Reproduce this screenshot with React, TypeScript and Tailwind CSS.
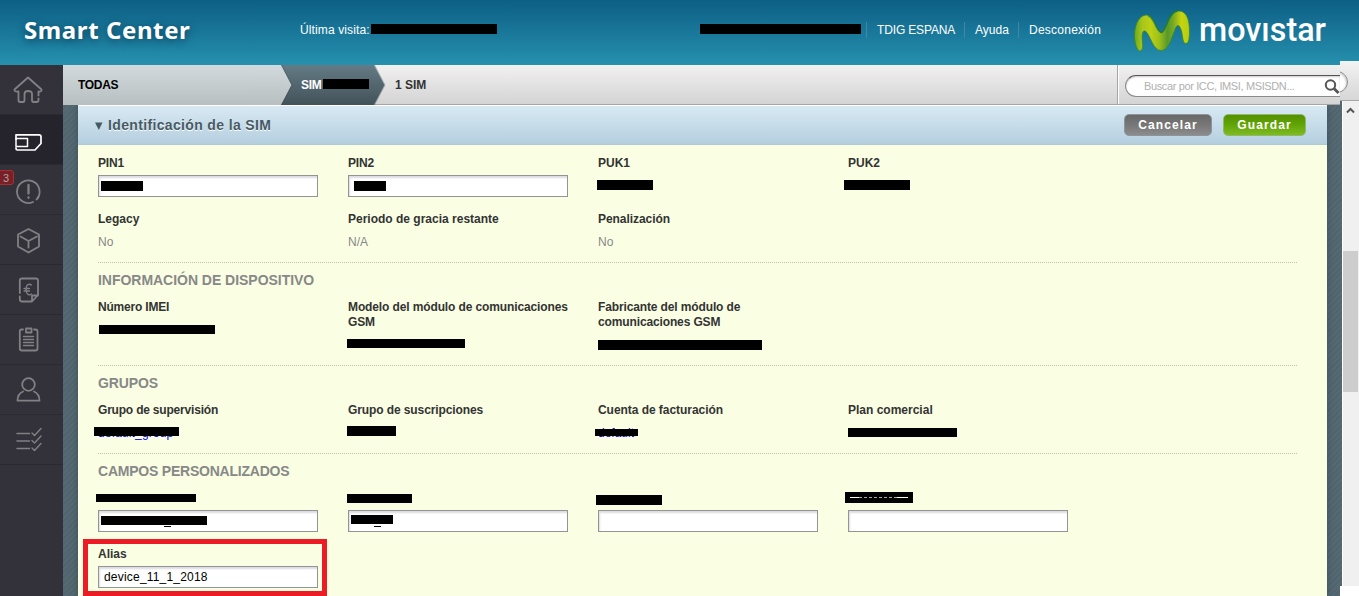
import type { ReactNode } from "react";

function Bar({ className }: { className: string }) {
  return <span className={`absolute bg-black ${className}`} />;
}

function Label({ children, className = "" }: { children?: ReactNode; className?: string }) {
  return (
    <div
      className={`relative top-px min-h-[15px] text-[12px] leading-[15px] font-bold text-[#333] ${className}`}
    >
      {children}
    </div>
  );
}

function Input({ children }: { children?: ReactNode }) {
  return (
    <div className="relative mt-[5px] h-[22px] border border-[#949494] bg-white pl-[5px] text-[12px] leading-[21px] tracking-[0.2px] text-black shadow-[inset_1px_2px_2px_#dcdce2]">
      {children}
    </div>
  );
}

function Value({ children }: { children?: ReactNode }) {
  return (
    <div className="relative mt-[5px] h-[22px] text-[12px] leading-[22px] text-[#888]">{children}</div>
  );
}

function Field({ children }: { children: ReactNode }) {
  return <div className="w-[220px]">{children}</div>;
}

function Row({ children }: { children: ReactNode }) {
  return <div className="flex h-[56px] gap-[30px]">{children}</div>;
}

function Heading({ children, className }: { children: ReactNode; className: string }) {
  return (
    <h3 className={`mb-[10px] pt-[8px] text-[14px] leading-[18px] font-bold text-[#888] ${className}`}>
      {children}
    </h3>
  );
}

function Chevron({ fill }: { fill: string }) {
  return (
    <svg width="12" height="40" viewBox="0 0 12 40" className="relative z-10 -mr-[12px] shrink-0">
      <defs>
        <linearGradient id="crumbLight" x1="0" y1="0" x2="0" y2="1">
          <stop offset="0" stopColor="#d2dadd" />
          <stop offset="1" stopColor="#b7bfc0" />
        </linearGradient>
        <linearGradient id="crumbDark" x1="0" y1="0" x2="0" y2="1">
          <stop offset="0" stopColor="#647b85" />
          <stop offset="1" stopColor="#435259" />
        </linearGradient>
      </defs>
      <path d="M0 0L10.5 20L0 40z" fill={fill} />
      <path d="M0.5 0L11 20L0.5 40" fill="none" stroke="#34454d" strokeOpacity=".35" />
    </svg>
  );
}

const icons: ReactNode[] = [
  <g key="home">
    <path d="M14.5 24.5L28 12.5L41.5 24.5Q42 27 38.500 26.500V35Q38.500 37 36.500 37H33.500Q32 37 32 35V29Q32 26 28 26Q24.500 26 24.500 29V35Q24.500 37 23 37H20Q18.500 37 18.500 35V26.500Q14 27 14.500 24.500Z" />
    <path d="M36.500 32h4" stroke="#33323a" strokeWidth="1.600" strokeLinecap="butt" />
  </g>,
  <g key="sim" stroke="#fff" strokeWidth="1.7">
    <path d="M16 24V19.800H39Q41 19.800 41 21.800V28.500L35 35H17.500Q16 35 16 33.500V32.800" />
    <path d="M16 23.500H27.500V31.500H16V23.500" strokeWidth="1.5" />
  </g>,
  <g key="alert">
    <path d="M36.500 34.500A11.300 11.300 0 1 0 33 37" />
    <path d="M38.500 31.500L37.500 33.500" />
    <path d="M28.500 20v8.500M28.500 32.500v.3" strokeWidth="2.300" />
  </g>,
  <g key="cube">
    <path d="M28.500 14L39 19.500V31.500L28.500 37.500L18 31.500V19.500ZM20.500 21.500L28.500 26L37 21.500M28.500 26V32.500" />
  </g>,
  <g key="invoice">
    <path d="M19.800 28V15.500Q19.800 13.500 22 13.500H36Q38 13.500 38 15.500V30L32 36.500H22Q19.800 36.500 19.800 34V31.500M32 36V30.500H38" />
    <path d="M31.500 20Q28 18 26.500 21.500Q25.500 25 26.800 28Q28.500 31 31.500 29M24 23.500H29.500M24 26H29.500" strokeWidth="1.300" />
  </g>,
  <g key="clipboard">
    <path d="M23 14.500H21.500Q19.800 14.500 19.800 16.500V33.500Q19.800 35.500 22 35.500H35.500Q37.500 35.500 37.500 33.500V16.500Q37.500 14.500 35.500 14.500H34M26 13.500H31.500V17.500H26Z" />
    <path d="M23.500 21.500H33.500M23.500 24.500H33.500M23.500 27.500H33.500M23.500 30.500H33.500" strokeWidth="1.400" />
  </g>,
  <g key="user">
    <circle cx="28.500" cy="19.500" r="6.300" />
    <path d="M23 26.500Q17.500 29 17.500 35.700H39.500Q39.500 29 34 26.500" />
  </g>,
  <g key="tasks" strokeWidth="1.400">
    <path d="M17 18.500H29.500M17 26H29.500M17 33.500H29.500" />
    <path d="M32 18L34.500 20.500L41 13.500M32 25.500L34.500 28L41 21M32 33L34.500 35.500L41 28.500" />
  </g>,
];

function Sidebar() {
  return (
    <nav className="relative w-[63px] shrink-0 bg-[#33323a]">
      {icons.map((icon, i) => (
        <div
          key={i}
          className={
            i === 1
              ? "h-[50px] border-b border-[#2b2a32] bg-[#25242d]"
              : "h-[50px] border-b border-[#2b2a31] bg-[#33323a]"
          }
        >
          <svg
            width="63"
            height="49"
            viewBox="0 0 63 49"
            fill="none"
            stroke="#808085"
            strokeWidth="1.8"
            strokeLinejoin="round"
            strokeLinecap="round"
          >
            {icon}
          </svg>
        </div>
      ))}
      <span className="absolute top-[105px] -left-[3px] h-[15px] w-[17px] rounded-[3px] border border-[#a52e35] bg-[#7a1f25] pl-[5px] text-[11px] leading-[14px] text-[#a5a5a8]">
        3
      </span>
    </nav>
  );
}

function Header() {
  return (
    <header className="flex h-[65px] shrink-0 bg-linear-to-b from-[#0d5f86] to-[#2691ae] text-white">
      <div className="w-[300px] pt-[12px] pl-[24px] font-['Noto_Sans'] text-[24px] leading-[36px] font-bold tracking-[0.6px] whitespace-nowrap [text-shadow:0_2px_8px_#0a3c55]">
        Smart Center
      </div>
      <div className="relative w-[400px] pt-[22px] text-[12px] leading-[16px] tracking-[0.12px]">
        Última visita:
        <Bar className="top-[24px] left-[71px] h-[10px] w-[126px]" />
      </div>
      <div className="relative flex w-[433px] items-start pt-[22px] text-[12px] leading-[16px] whitespace-nowrap">
        <Bar className="top-[24px] left-0 h-[10px] w-[161px]" />
        <span className="ml-[166px] w-[98px] border-l border-[#4088a8] pl-[10px] tracking-[-0.15px]">
          TDIG ESPANA
        </span>
        <span className="w-[54px] border-l border-[#4088a8] pl-[10px]">Ayuda</span>
        <span className="border-l border-[#4088a8] pl-[10px] tracking-[0.25px]">Desconexión</span>
      </div>
      <svg width="200" height="60" viewBox="0 0 200 60">
        <defs>
          <linearGradient id="brand" x1="0" y1="0" x2="1" y2="0">
            <stop offset="0" stopColor="#6aa820" />
            <stop offset=".14" stopColor="#a8c61a" />
            <stop offset=".3" stopColor="#bdd014" />
            <stop offset=".45" stopColor="#9dbf1a" />
            <stop offset=".6" stopColor="#57992a" />
            <stop offset=".7" stopColor="#76a824" />
            <stop offset=".85" stopColor="#c6d40e" />
            <stop offset="1" stopColor="#b4cd12" />
          </linearGradient>
        </defs>
        <path
          d="M6.500 51C3.500 50 1.300 42 1.500 34C2 24 6.500 15 13.500 15C21.500 15 23 32 28.500 32.500C33 32.500 35 11 46 11C54 11 56.500 21 56.500 31C56.500 37 56 43.500 53 43.500C49.500 43.500 50 37 48.500 31C47 26 45 24 43 27C39 36 36.500 50 28.500 50.500C19.500 51 17 33 12 31C8.500 30 9 38 9.500 43C10 47 9.500 51 6.500 51Z"
          fill="url(#brand)"
          stroke="#35882a"
          strokeWidth=".8"
        />
        <path
          d="M15 15.800C21.500 17 23.500 32 28.500 32.500C33 32.500 35 12 44 11.200"
          fill="none"
          stroke="#1d7a30"
          strokeOpacity=".65"
          strokeWidth="1.800"
        />
        <text
          x="66"
          y="41"
          fill="#fff"
          fontFamily="Roboto, sans-serif"
          fontWeight="500"
          fontSize="32.5"
          textLength="127"
          lengthAdjust="spacingAndGlyphs"
        >
          movıstar
        </text>
      </svg>
    </header>
  );
}

function Breadcrumb() {
  return (
    <div className="relative z-10 flex h-[40px] w-[1277px] shrink-0 bg-linear-to-b from-[#f1f1f1] to-[#d3d3d3] text-[12px] leading-[40px] font-bold">
      <div className="w-[218px] bg-linear-to-b from-[#d2dadd] to-[#b7bfc0] pl-[15px] tracking-[-0.3px] text-black">
        TODAS
      </div>
      <Chevron fill="url(#crumbLight)" />
      <div className="relative w-[93px] bg-linear-to-b from-[#647b85] to-[#435259] pl-[20px] tracking-[-0.3px] text-white">
        SIM
        <Bar className="top-[14px] left-[42px] h-[10px] w-[46px]" />
      </div>
      <Chevron fill="url(#crumbDark)" />
      <div className="flex-1 border-b border-[#a5a5a5] pl-[21px] text-[#333]">1 SIM</div>
      <div className="w-[223px] border-b border-l border-[#a5a5a5] pt-[10px] pl-[7px] shadow-[inset_1px_0_#fff]">
        <div className="relative h-[22px] w-[215px] rounded-l-full border border-r-0 border-[#8b8b8b] border-t-[#555] bg-white pl-[18px] text-[11px] leading-[20px] font-normal tracking-[-0.37px] whitespace-nowrap text-[#b0b0b0] shadow-[inset_0_1px_2px_#ccc]">
          Buscar por ICC, IMSI, MSISDN...
          <svg
            width="16"
            height="16"
            viewBox="0 0 16 16"
            className="absolute top-[3px] right-0"
            fill="none"
            stroke="#555"
          >
            <circle cx="6.500" cy="6" r="4.700" strokeWidth="2" />
            <path d="M10 9.500L14.500 14" strokeWidth="2.800" />
          </svg>
        </div>
      </div>
    </div>
  );
}

function ScrollEdge() {
  return (
    <div className="absolute top-[61px] right-0 z-20 flex h-[535px] w-[19px] flex-col">
      <div className="h-[40px] overflow-hidden border-b border-[#a5a5a5] bg-linear-to-b from-[#f3f3f3] to-[#d6d6d6] pt-[10px]">
        <div className="-ml-[20px] h-[22px] w-[28px] rounded-r-full border border-[#8b8b8b] bg-white shadow-[inset_-1px_1px_2px_#ccc]" />
      </div>
      <div className="ml-[2px] h-[485px] border-l border-white bg-[#f0f0f0] pr-[1px]">
        <svg width="15" height="150" viewBox="0 0 15 150" fill="none" stroke="#555" strokeWidth="2">
          <path d="M4 11.500L7.500 8L11 11.500" />
        </svg>
        <div className="h-[141px] bg-[#cdcdcd]" />
      </div>
      <div className="h-[10px] bg-white" />
    </div>
  );
}

function PanelTitle() {
  return (
    <div className="flex h-[40px] shrink-0 border-t border-b border-t-white border-b-[#b3c8d6] bg-linear-to-b from-[#d8e9f3] to-[#b5cfdf] pl-[16px]">
      <svg width="14" height="38" viewBox="0 0 14 38">
        <path d="M1 16.500H8.500L4.800 24Z" fill="#465a64" />
      </svg>
      <h2 className="flex-1 text-[14px] leading-[38px] font-bold tracking-[0.35px] text-[#465a64] [text-shadow:0_1px_#fff]">
        Identificación de la SIM
      </h2>
      <div className="mt-[8px] mr-[21px] flex gap-[11px] text-center text-[12px] leading-[21px] font-bold text-white">
        <button className="h-[22px] w-[88px] rounded-[5px] border border-[#8c9499] bg-linear-to-b from-[#686868] via-[#777] to-[#8c8c8c] tracking-[1.1px]">
          Cancelar
        </button>
        <button className="h-[22px] w-[83px] rounded-[5px] border border-[#8dba66] bg-linear-to-b from-[#549000] via-[#62a506] to-[#7ebb20] tracking-[1.1px]">
          Guardar
        </button>
      </div>
    </div>
  );
}

function Form() {
  return (
    <div className="relative min-h-0 flex-1 bg-[#faffe4] pr-[30px] pl-[20px]">
      <section className="h-[118px] border-b border-dotted border-[#bfc3b2] pt-[10px]">
        <Row>
          <Field>
            <Label className="tracking-[-0.2px]">PIN1</Label>
            <Input>
              <Bar className="top-[5px] left-[2px] h-[10px] w-[42px]" />
            </Input>
          </Field>
          <Field>
            <Label className="tracking-[-0.2px]">PIN2</Label>
            <Input>
              <Bar className="top-[5px] left-[5px] h-[10px] w-[32px]" />
            </Input>
          </Field>
          <Field>
            <Label>PUK1</Label>
            <Value>
              <Bar className="top-[5px] -left-px h-[10px] w-[56px]" />
            </Value>
          </Field>
          <Field>
            <Label>PUK2</Label>
            <Value>
              <Bar className="top-[5px] -left-[4px] h-[10px] w-[66px]" />
            </Value>
          </Field>
        </Row>
        <Row>
          <Field>
            <Label>Legacy</Label>
            <Value>No</Value>
          </Field>
          <Field>
            <Label>Periodo de gracia restante</Label>
            <Value>N/A</Value>
          </Field>
          <Field>
            <Label className="tracking-[-0.06px]">Penalización</Label>
            <Value>No</Value>
          </Field>
        </Row>
      </section>

      <section className="h-[103px] border-b border-dotted border-[#bfc3b2]">
        <Heading className="tracking-[-0.03px]">INFORMACIÓN DE DISPOSITIVO</Heading>
        <Row>
          <Field>
            <Label className="tracking-[-0.2px]">Número IMEI</Label>
            <Value>
              <Bar className="top-[6px] left-px h-[9px] w-[116px]" />
            </Value>
          </Field>
          <Field>
            <Label className="tracking-[-0.12px]">
              <span className="whitespace-nowrap">Modelo del módulo de comunicaciones</span>
              <br />
              GSM
            </Label>
            <Value>
              <Bar className="top-[5px] -left-px h-[9px] w-[118px]" />
            </Value>
          </Field>
          <Field>
            <Label className="tracking-[-0.13px]">
              Fabricante del módulo de
              <br />
              comunicaciones GSM
            </Label>
            <Value>
              <Bar className="top-[6px] left-0 h-[10px] w-[164px]" />
            </Value>
          </Field>
        </Row>
      </section>

      <section className="h-[88px] border-b border-dotted border-[#bfc3b2]">
        <Heading className="tracking-[-0.1px]">GRUPOS</Heading>
        <Row>
          <Field>
            <Label className="tracking-[-0.2px]">Grupo de supervisión</Label>
            <Value>
              <span className="tracking-[0.15px] text-[#0000ee]">default_group</span>
              <Bar className="top-[5px] -left-[4px] h-[9px] w-[85px]" />
            </Value>
          </Field>
          <Field>
            <Label className="tracking-[-0.1px]">Grupo de suscripciones</Label>
            <Value>
              <Bar className="top-[4px] -left-px h-[10px] w-[49px]" />
            </Value>
          </Field>
          <Field>
            <Label className="tracking-[-0.05px]">Cuenta de facturación</Label>
            <Value>
              <span className="text-[#0000ee]">default</span>
              <Bar className="top-[7px] -left-[3px] h-[7px] w-[43px]" />
            </Value>
          </Field>
          <Field>
            <Label>Plan comercial</Label>
            <Value>
              <Bar className="top-[6px] left-0 h-[9px] w-[109px]" />
            </Value>
          </Field>
        </Row>
      </section>

      <section>
        <Heading className="tracking-[-0.22px]">CAMPOS PERSONALIZADOS</Heading>
        <Row>
          <Field>
            <Label>
              <Bar className="top-[3px] -left-[2px] h-[8px] w-[100px]" />
            </Label>
            <Input>
              <Bar className="top-[5px] left-[2px] h-[9px] w-[106px]" />
              <Bar className="top-[15px] left-[65px] h-px w-[7px]" />
            </Input>
          </Field>
          <Field>
            <Label>
              <Bar className="top-[3px] -left-px h-[9px] w-[65px]" />
            </Label>
            <Input>
              <Bar className="top-[4px] left-[2px] h-[9px] w-[42px]" />
              <Bar className="top-[15px] left-[25px] h-px w-[7px]" />
            </Input>
          </Field>
          <Field>
            <Label>
              <Bar className="top-[4px] -left-[2px] h-[10px] w-[66px]" />
            </Label>
            <Input />
          </Field>
          <Field>
            <Label>
              <Bar className="top-px -left-[3px] h-[11px] w-[68px]" />
              <span className="absolute top-[6px] left-[2px] h-px w-[9px] bg-[#faffe4]" />
              <span className="absolute top-[6px] left-[11px] w-[38px] border-t border-dashed border-[#a7aa99]" />
              <span className="absolute top-[6px] left-[49px] h-px w-[11px] bg-[#faffe4]" />
            </Label>
            <Input />
          </Field>
        </Row>
        <Row>
          <Field>
            <Label>Alias</Label>
            <Input>device_11_1_2018</Input>
          </Field>
        </Row>
      </section>
      <div className="absolute bottom-0 left-[5px] h-[57px] w-[244px] border-[5px] border-[#ed1c24]" />
    </div>
  );
}

export default function App() {
  return (
    <div className="relative flex h-[596px] w-[1359px] flex-col overflow-hidden bg-[#53666f] font-['Liberation_Sans',Arial,sans-serif]">
      <Header />
      <div className="flex h-[531px]">
        <Sidebar />
        <div className="flex w-[1296px] flex-col bg-[repeating-linear-gradient(135deg,#566a74_0_2px,#50656e_2px_4px)]">
          <Breadcrumb />
          <div className="ml-[15px] flex h-[491px] w-[1249px] flex-col shadow-[0_0_7px_#3d4e57]">
            <PanelTitle />
            <Form />
          </div>
        </div>
      </div>
      <ScrollEdge />
    </div>
  );
}
